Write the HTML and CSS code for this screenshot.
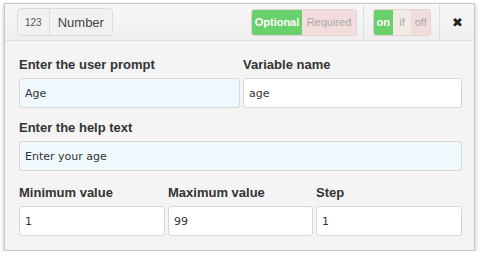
FILE: index.html
```html
<!DOCTYPE html>
<html lang="en">
<head>
    <meta charset="UTF-8">
    <title>Number field</title>
    <link rel="stylesheet" href="styles.css">
</head>
<body>

<div class="card">
    <div class="header">
        <div class="type">
            <span class="type-icon">123</span>
            <span class="type-name">Number</span>
        </div>
        <div class="seg need">
            <span class="active">Optional</span>
            <span class="off">Required</span>
        </div>
        <div class="sep"></div>
        <div class="seg state">
            <span class="active">on</span>
            <span class="maybe">if</span>
            <span class="off">off</span>
        </div>
        <div class="sep"></div>
        <div class="close">&#x2716;</div>
    </div>

    <div class="body">
        <div class="row two">
            <div class="field">
                <label>Enter the user prompt</label>
                <input class="hint" type="text" value="Age">
            </div>
            <div class="field">
                <label>Variable name</label>
                <input type="text" value="age">
            </div>
        </div>
        <div class="row">
            <div class="field">
                <label>Enter the help text</label>
                <input class="hint" type="text" value="Enter your age">
            </div>
        </div>
        <div class="row three">
            <div class="field">
                <label>Minimum value</label>
                <input type="text" value="1">
            </div>
            <div class="field">
                <label>Maximum value</label>
                <input type="text" value="99">
            </div>
            <div class="field">
                <label>Step</label>
                <input type="text" value="1">
            </div>
        </div>
    </div>
</div>

</body>
</html>
```

FILE: styles.css
```css
body {
    margin: 0;
    background: #fff;
    font-family: "Liberation Sans", Arial, sans-serif;
    color: #333;
}

.card {
    margin: 3px 0 0 4px;
    width: 469px;
    background: #f4f4f4;
    border: 1px solid #c8c8c8;
    box-shadow: 0 2px 4px rgba(0, 0, 0, 0.3);
}

.header {
    display: flex;
    align-items: center;
    height: 36px;
    padding-left: 12px;
    background: linear-gradient(#f7f7f7, #efefef);
    border-bottom: 1px solid #e2e2e2;
}

.type {
    display: flex;
    height: 26px;
    border: 1px solid #dcdcdc;
    border-radius: 4px;
    background: #f1f1f1;
}

.type span {
    display: flex;
    align-items: center;
}

.type-icon {
    font-size: 10px;
    padding: 0 7px;
    border-right: 1px solid #dcdcdc;
    color: #555;
}

.type-name {
    font-size: 13px;
    padding: 0 8px;
    color: #444;
}

.seg {
    display: flex;
    height: 25px;
    border: 1px solid #e2d2d2;
    border-radius: 3px;
    overflow: hidden;
    font-size: 11px;
}

.seg span {
    display: flex;
    align-items: center;
    justify-content: center;
    color: #aaa;
}

.seg .active {
    background: #69d16b;
    color: #fff;
    font-weight: bold;
}

.seg .off {
    background: #f2dcdc;
}

.seg .maybe {
    background: #f3ebe6;
}

.need {
    margin-left: auto;
    width: 104px;
}

.need span {
    flex: 1;
}

.need .active {
    flex: 0 0 50px;
}

.state {
    width: 56px;
}

.state span {
    flex: 1;
}

.sep {
    align-self: stretch;
    width: 1px;
    background: #dedede;
    margin: 0 9px 0 6px;
}

.state + .sep {
    margin: 0 0 0 8px;
}

.close {
    width: 34px;
    text-align: center;
    font-size: 13px;
    color: #222;
}

.body {
    padding: 16px 12px 14px 14px;
}

.row {
    margin-bottom: 12px;
}

.row + .three {
    margin-top: 14px;
}

.row:last-child {
    margin-bottom: 0;
}

.two {
    display: grid;
    grid-template-columns: 221px 1fr;
    gap: 3px;
}

.three {
    display: grid;
    grid-template-columns: 146px 145px 1fr;
    gap: 3px;
}

.field label {
    display: block;
    font-size: 13px;
    font-weight: bold;
    line-height: 16px;
    margin-bottom: 5px;
    color: #333;
}

.field input {
    display: block;
    box-sizing: border-box;
    width: 100%;
    height: 30px;
    margin: 0;
    padding: 0 5px;
    border: 1px solid #d6d6d6;
    border-radius: 3px;
    background: #fff;
    font-family: "DejaVu Sans", Verdana, sans-serif;
    font-size: 11px;
    color: #333;
}

.field input.hint {
    background: #eef8fd;
}
```
